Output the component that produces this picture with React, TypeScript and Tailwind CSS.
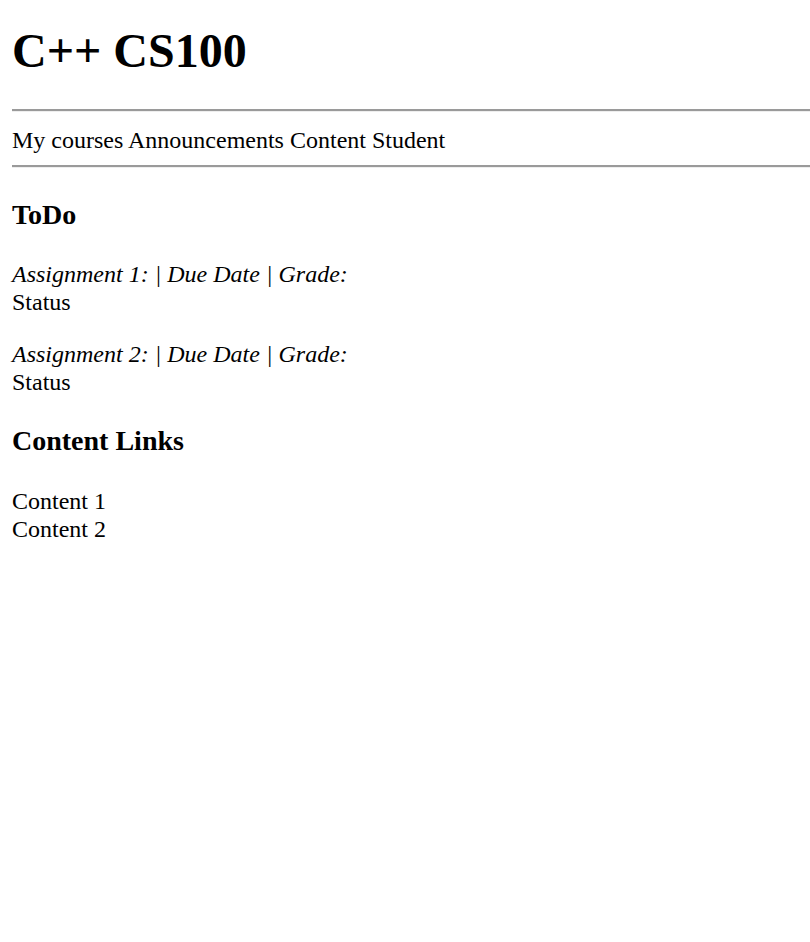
import React from "react";

export default function App() {
  return (
    <div className="min-h-[942px] bg-white pl-[12px] font-['Liberation_Serif','Times_New_Roman',serif] text-[24px] leading-[28px] text-black">
      <div className="h-px" />
      <h1 className="mt-[22px] text-[48px] font-bold leading-[normal]">C++ CS100</h1>
      <hr className="mt-[31px] h-0 border-0 border-t-2 border-b border-t-[#9a9a9a] border-b-[#eeeeee]" />
      <div className="mt-[14px]">My courses Announcements Content Student</div>
      <hr className="mt-[11px] h-0 border-0 border-t-2 border-b border-t-[#9a9a9a] border-b-[#eeeeee]" />
      <h3 className="mt-[31px] text-[28px] font-bold leading-[normal]">ToDo</h3>
      <p className="mt-[29px]">
        <i>Assignment 1: | Due Date | Grade:</i>
        <br />
        Status
      </p>
      <p className="mt-[24px]">
        <i>Assignment 2: | Due Date | Grade:</i>
        <br />
        Status
      </p>
      <h3 className="mt-[29px] text-[28px] font-bold leading-[normal]">Content Links</h3>
      <div className="mt-[30px]">
        <div>Content 1</div>
        <div>Content 2</div>
      </div>
    </div>
  );
}
